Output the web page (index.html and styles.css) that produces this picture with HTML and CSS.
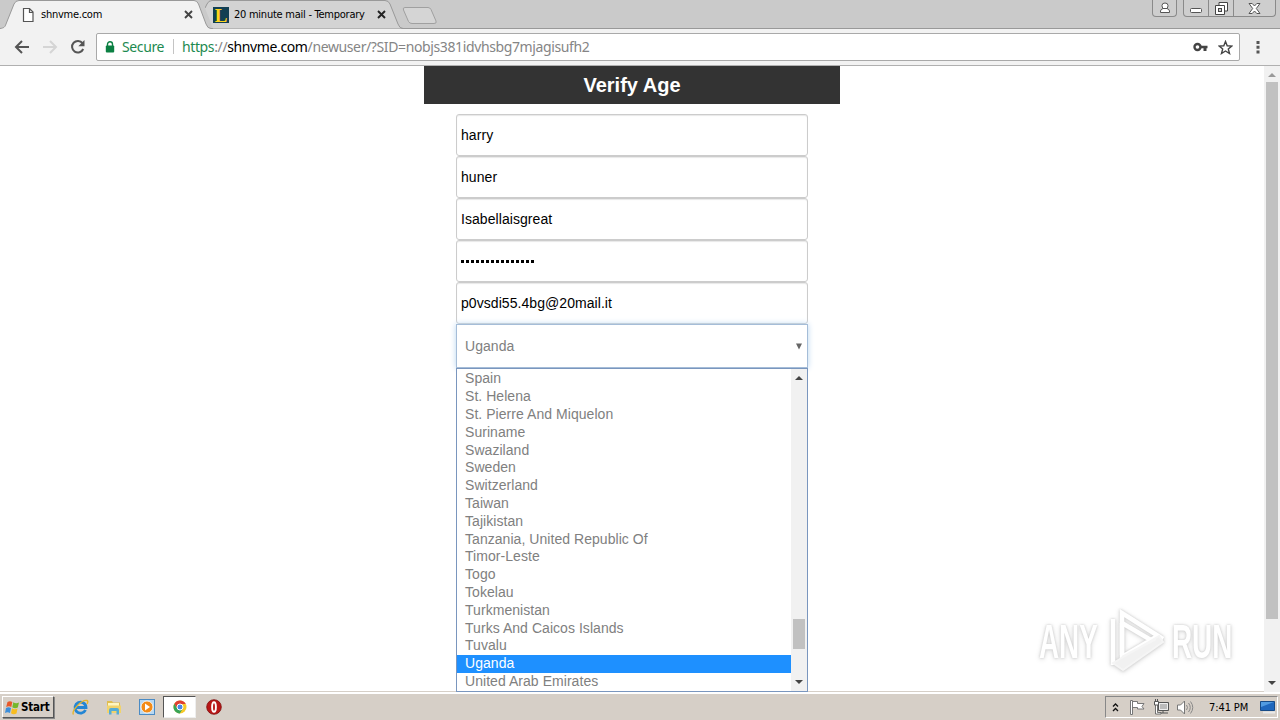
FILE: index.html
```html
<!DOCTYPE html>
<html lang="en">
<head>
    <meta charset="utf-8">
    <title>Verify Age</title>
    <link rel="stylesheet" href="styles.css">
</head>
<body>
    <div class="tabstrip">
        <div class="tab tab-active">
            <svg class="tab-shape" width="212" height="29" viewBox="0 0 212 29"><path d="M0 28.5C4 28 5 27 6 24L14 4Q15.500 .5 19 .5H194Q197 .5 198.500 4L206 24Q207.500 28.500 211 28.500V29H0Z" fill="#f2f2f2"/><path d="M0 28.500C4 28 5 27 6 24L14 4Q15.500 .5 19 .5H194Q197 .5 198.500 4L206 24Q207.500 28.500 211 28.500" fill="none" stroke="#999"/></svg>
            <svg class="favicon" width="16" height="16" viewBox="0 0 16 16"><path d="M3.500 1.500h6l3.500 3.500v9.500H3.500zM9.500 1.500V5.500H13" fill="#fff" stroke="#555" stroke-width="1.200"/></svg>
            <span class="tab-title">shnvme.com</span>
            <svg class="tab-close" width="9" height="9" viewBox="0 0 9 9"><path d="M1 1l7 7M8 1L1 8" stroke="#444" stroke-width="1.900"/></svg>
        </div>
        <div class="tab tab-second">
            <svg class="tab-shape" width="198" height="29" viewBox="0 0 198 29"><path d="M0 8L2 4Q3.500 .5 7 .5H180Q183.500 .5 185 4L193 24Q194.500 28.500 198 28.500H8Z" fill="#d3d3d3"/><path d="M0 8L2 4Q3.500 .5 7 .5H180Q183.500 .5 185 4L193 24Q194.500 28.500 198 28.500" fill="none" stroke="#999"/></svg>
            <span class="favicon favicon-l">L</span>
            <span class="tab-title">20 minute mail - Temporary</span>
            <svg class="tab-close" width="9" height="9" viewBox="0 0 9 9"><path d="M1 1l7 7M8 1L1 8" stroke="#222" stroke-width="1.900"/></svg>
        </div>
        <svg class="new-tab" width="36" height="18" viewBox="0 0 36 18"><path d="M3 .5H26Q28 .5 29 2.500L34 14Q35 16.500 32 16.500H10Q7.500 16.500 6.500 14.500L1.500 3Q.5 .5 3 .5Z" fill="#d5d5d5" stroke="#a0a0a0"/></svg>
        <div class="window-buttons">
            <div class="win-btn user"><svg width="12" height="12" viewBox="0 0 12 12"><path d="M1.500 10.500V9Q1.500 7.500 4 6.500Q3 5 3 3.500Q3 1 6 1Q9 1 9 3.500Q9 5 8 6.500Q10.500 7.500 10.500 9V10.500Z" fill="#fff" stroke="#555"/><path d="M4 6.500h4" stroke="#555"/></svg></div>
            <div class="win-btn min"><svg width="13" height="5" viewBox="0 0 13 5"><rect x=".5" y=".5" width="11" height="4" rx="1" fill="#fff" stroke="#555"/></svg></div>
            <div class="win-btn max"><svg width="13" height="13" viewBox="0 0 13 13"><path d="M4 .5h8.500v8.500h-3v3.500H.5V3.500H4zM4 3.500h5.500V9" fill="#fff" stroke="#444"/><rect x="3.500" y="6.500" width="3" height="3" fill="#ccc" stroke="#444"/></svg></div>
            <div class="win-btn close"><svg width="13" height="11" viewBox="0 0 13 11"><path d="M1 .5h3.200L6.500 3 8.800 .5H12L8.300 5.500 12 10.500H8.800L6.500 8 4.200 10.500H1L4.700 5.500Z" fill="#fff" stroke="#555"/></svg></div>
        </div>
    </div>

    <div class="toolbar">
        <svg class="nav" width="16" height="16" viewBox="0 0 16 16"><path d="M15 8H3M8 2L2 8l6 6" fill="none" stroke="#555" stroke-width="2"/></svg>
        <svg class="nav" width="16" height="16" viewBox="0 0 16 16"><path d="M1 8h12M8 2l6 6-6 6" fill="none" stroke="#d5d5d5" stroke-width="2"/></svg>
        <svg class="nav" width="16" height="16" viewBox="0 0 16 16"><path d="M13.200 10A5.800 5.800 0 1 1 12.500 4.200" fill="none" stroke="#555" stroke-width="2"/><path d="M14.500 1v6.200H8.300Z" fill="#555"/></svg>
        <div class="omnibox">
            <svg class="lock" width="10" height="12" viewBox="0 0 10 12"><path d="M2.500 5V3.300a2.500 2.500 0 0 1 5 0V5" fill="none" stroke="#0b8043" stroke-width="1.400"/><rect x=".8" y="4.500" width="8.400" height="7" rx="1" fill="#0b8043"/></svg>
            <span class="secure">Secure</span>
            <span class="url"><span class="scheme">https</span>://<b>shnvme.com</b>/newuser/?SID=nobjs381idvhsbg7mjagisufh2</span>
            <svg class="key" width="15" height="10" viewBox="0 0 15 10"><circle cx="4.500" cy="5" r="3" fill="none" stroke="#444" stroke-width="2.400"/><path d="M7 3.700h7.500v2.600H13.500V9h-3V6.300H7z" fill="#444"/></svg>
            <svg class="star" width="15" height="15" viewBox="0 0 15 15"><path d="M7.500 1.500l1.700 4.300 4.600.3-3.500 2.900 1.200 4.500-4-2.500-4 2.500 1.200-4.500L1.200 6.100l4.600-.3z" fill="none" stroke="#444" stroke-width="1.400"/></svg>
        </div>
        <svg class="menu" width="4" height="14" viewBox="0 0 4 14"><path d="M.5 1h3v3h-3zM.5 5.700h3v3h-3zM.5 10.500h3v3h-3z" fill="#555"/></svg>
    </div>

    <div class="page">
        <div class="content">
            <h1>Verify Age</h1>
            <form class="signup">
                <div class="field">harry</div>
                <div class="field">huner</div>
                <div class="field">Isabellaisgreat</div>
                <div class="field"><span class="dots"></span></div>
                <div class="field">p0vsdi55.4bg@20mail.it</div>
                <div class="select">Uganda
                    <svg width="8" height="7" viewBox="0 0 8 7"><path d="M1 .5h6L4 6.500z" fill="#666"/></svg>
                </div>
                <div class="dropdown">
                    <ul>
                        <li>Spain</li>
                        <li>St. Helena</li>
                        <li>St. Pierre And Miquelon</li>
                        <li>Suriname</li>
                        <li>Swaziland</li>
                        <li>Sweden</li>
                        <li>Switzerland</li>
                        <li>Taiwan</li>
                        <li>Tajikistan</li>
                        <li>Tanzania, United Republic Of</li>
                        <li>Timor-Leste</li>
                        <li>Togo</li>
                        <li>Tokelau</li>
                        <li>Turkmenistan</li>
                        <li>Turks And Caicos Islands</li>
                        <li>Tuvalu</li>
                        <li class="selected">Uganda</li>
                        <li>United Arab Emirates</li>
                    </ul>
                    <div class="list-scroll">
                        <svg width="8" height="4" viewBox="0 0 8 4"><path d="M0 4L4 0l4 4z" fill="#444"/></svg>
                        <div class="thumb"></div>
                        <svg width="8" height="4" viewBox="0 0 8 4"><path d="M0 0h8L4 4z" fill="#444"/></svg>
                    </div>
                </div>
            </form>
        </div>
        <div class="page-scroll">
            <svg width="8" height="4" viewBox="0 0 8 4"><path d="M0 4L4 0l4 4z" fill="#999"/></svg>
            <div class="thumb"></div>
            <svg width="8" height="4" viewBox="0 0 8 4"><path d="M0 0h8L4 4z" fill="#444"/></svg>
        </div>
        <div class="watermark">
            <span>ANY</span>
            <svg width="58" height="64" viewBox="0 0 58 64"><g fill="none" stroke="#fff" stroke-width="4.500"><path d="M13 46V4l41 26"/><path d="M4 56V10M13 14l34 20M13 14v34l34-20"/></g><path d="M4 54L50 27l4 6L14 61zM13 48l34-18" fill="#f1f1f1" stroke="#f5f5f5" stroke-width="2"/></svg>
            <span>RUN</span>
        </div>
    </div>

    <div class="taskbar">
        <div class="start">
            <svg width="15" height="15" viewBox="0 0 15 15"><path d="M2.500 2Q5 .5 7.300 2L6.300 7Q4 5.500 1.200 7Z" fill="#e8582a"/><path d="M8.300 2.300Q11 4 14 2.500L12.800 7.500Q10 9 7.300 7.300Z" fill="#75b72b"/><path d="M1 8Q3.500 6.500 6 8L5 13Q2.500 11.500 0 13Z" fill="#3c8edb"/><path d="M7 8.300Q9.500 10 12.500 8.500L11.500 13.500Q8.500 15 6 13.300Z" fill="#f8bd20"/></svg>
            <span>Start</span>
        </div>
        <div class="task"><svg width="17" height="17" viewBox="0 0 17 17"><path d="M13.500 11A5.500 5.500 0 1 1 14 8.500H4" fill="none" stroke="#2386d4" stroke-width="2.800"/><path d="M1.500 15.500C-1 12 10 0 15 1.500c1.500.5.500 2.500 0 3.500" fill="none" stroke="#e5b52c" stroke-width="1.400"/></svg></div>
        <div class="task"><svg width="16" height="16" viewBox="0 0 16 16"><path d="M1 2h5l1 1.500h7V13H1z" fill="#e0bd50"/><path d="M2 4h11v5H2z" fill="#fff6c0"/><path d="M1 6.500h14V14H1z" fill="#f1d36c"/><path d="M3 15.500v-4.500q0-2 2-2h6q2 0 2 2v4.500h-2.500v-3.500h-5v3.500z" fill="#55acd6"/></svg></div>
        <div class="task"><svg width="16" height="16" viewBox="0 0 16 16"><rect x=".5" y=".5" width="15" height="15" fill="#b7d8f2" stroke="#4b8bc4"/><circle cx="8" cy="8" r="6" fill="#f38b17" stroke="#fff" stroke-width=".8"/><path d="M6 4.500v7l5-3.500z" fill="#fff"/></svg></div>
        <div class="task task-active"><svg width="14" height="14" viewBox="0 0 14 14"><circle cx="7" cy="7" r="6.500" fill="#f6c928"/><path d="M1.300 3.800A6.500 6.500 0 0 1 12.800 4H7L4 8.500z" fill="#df4032"/><path d="M1.300 3.800A6.500 6.500 0 0 0 6.800 13.500L9.500 9 4.200 8.500z" fill="#37a457"/><circle cx="7" cy="7" r="3" fill="#4788e8" stroke="#fff"/></svg></div>
        <div class="task opera"><svg width="16" height="16" viewBox="0 0 16 16"><circle cx="8" cy="8" r="7.300" fill="#b91616" stroke="#7d0c0c" stroke-width=".8"/><ellipse cx="8" cy="8" rx="1.900" ry="4.800" fill="#b91616" stroke="#fff" stroke-width="1.900"/></svg></div>
        <div class="tray">
            <svg class="chevrons" width="7" height="9" viewBox="0 0 7 9"><path d="M1 3.500L3.500 1 6 3.500M1 8l2.500-2.500L6 8" fill="none" stroke="#111" stroke-width="1.300"/></svg>
            <svg class="flag" width="16" height="16" viewBox="0 0 16 16"><path d="M1.500 15.500V1.500h2v14zM3.500 2.500h5v2h6.500l-2 3 2 2.500H8.500V8.500h-5z" fill="#fff" stroke="#777"/></svg>
            <svg class="network" width="16" height="16" viewBox="0 0 16 16"><path d="M5.500 3.500h10v8h-10z" fill="#bbb" stroke="#555"/><path d="M6.500 4.500h8v6h-8z" fill="none" stroke="#eee"/><path d="M7 14h8M10 11.500V14" stroke="#555"/><path d="M2.500 5.500h2v8H8v1.500H2.500z" fill="#fff" stroke="#555" stroke-width=".8"/><path d="M1.500 2.500h4v3.500h-4zM2.500 0v2M4.500 0v2" fill="#fff" stroke="#555"/></svg>
            <svg class="sound" width="17" height="15" viewBox="0 0 17 15"><path d="M.5 5h3L7.500 1v13l-4-4h-3z" fill="#fff" stroke="#777"/><path d="M9.500 5q2 2.500 0 5M11.500 3q3.500 4.500 0 9M13.500 1.500q4.500 6 0 12" fill="none" stroke="#888"/></svg>
            <span class="clock">7:41 PM</span>
            <svg class="desktop" width="16" height="14" viewBox="0 0 16 14"><path d="M.5 1.500h14v9H.5z" fill="#1f67bd" stroke="#174b87"/><path d="M1 2h13L1 7z" fill="#519be1"/><path d="M3 12.500h12" stroke="#e8e8e8" stroke-width="2"/></svg>
        </div>
    </div>
</body>
</html>
```

FILE: styles.css
```css
* {
    box-sizing: border-box;
}
body {
    margin: 0;
    width: 1280px;
    height: 720px;
    overflow: hidden;
    display: flex;
    flex-direction: column;
    background: #fff;
    font-family: "Liberation Sans", Arial, sans-serif;
}
svg {
    display: block;
    flex: none;
}

/* tabs */
.tabstrip {
    height: 29px;
    flex: none;
    display: flex;
    background: #cacaca;
    box-shadow: inset 0 -1px #999;
    font-family: "DejaVu Sans Condensed", "DejaVu Sans", sans-serif;
    font-size: 11px;
}
.tab {
    position: relative;
    height: 29px;
    display: flex;
    align-items: center;
}
.tab > * {
    position: relative;
}
.tab .tab-shape {
    position: absolute;
    left: 0;
    top: 0;
}
.tab-active {
    width: 205px;
    padding-left: 20px;
    z-index: 1;
}
.tab-second {
    width: 198px;
    padding-left: 8px;
}
.favicon {
    flex: none;
    margin-right: 5px;
}
.favicon-l {
    width: 16px;
    height: 16px;
    background: #123f52;
    color: #ffd51c;
    font: bold 19px/17px "Liberation Serif", serif;
    text-align: center;
}
.tab-title {
    width: 143px;
    white-space: nowrap;
    letter-spacing: -0.25px;
}
.tab-second .tab-title {
    width: 135px;
    margin-right: 8px;
}
.new-tab {
    margin: 7px 0 0 -1px;
}
.window-buttons {
    margin-left: auto;
    margin-right: 4px;
    display: flex;
}
.win-btn {
    height: 17px;
    border: 1px solid #8a8a8a;
    border-top: 0;
    display: flex;
    align-items: center;
    justify-content: center;
    background: #cecece;
}
.user {
    width: 25px;
    margin-right: 6px;
    border-radius: 0 0 4px 4px;
}
.min {
    width: 26px;
    padding-top: 4px;
    border-radius: 0 0 0 4px;
}
.max {
    width: 25px;
    border-left: 0;
}
.close {
    width: 42px;
    border-left: 0;
    border-radius: 0 0 4px 0;
}

/* address bar */
.toolbar {
    height: 37px;
    flex: none;
    display: flex;
    align-items: center;
    padding-left: 14px;
    background: #f2f2f2;
    border-bottom: 1px solid #b0b0b0;
}
.nav {
    margin-right: 12px;
}
.omnibox {
    width: 1144px;
    height: 28px;
    margin-left: -2px;
    display: flex;
    align-items: center;
    padding: 0 6px 0 8px;
    background: #fff;
    border: 1px solid #a9a9a9;
    border-radius: 2px;
    font-family: "Noto Sans", sans-serif;
    font-size: 14px;
    letter-spacing: -0.38px;
    white-space: nowrap;
}
.lock {
    margin-bottom: 1px;
}
.secure {
    width: 52px;
    margin: -2px 8px 0 7px;
    line-height: 15px;
    border-right: 1px solid #c4c4c4;
    color: #1d8a50;
}
.url {
    margin-top: -2px;
    color: #858585;
}
.url b {
    color: #000;
    font-weight: normal;
}
.scheme {
    color: #1d8a50;
}
.key {
    margin: 0 10px 0 auto;
}
.menu {
    margin-left: 16px;
}

/* page */
.page {
    position: relative;
    height: 626px;
    flex: none;
    display: flex;
}
.content {
    width: 416px;
    margin-left: 424px;
}
h1 {
    height: 38px;
    margin: 0 0 10px;
    background: #333;
    color: #fff;
    font-size: 20px;
    line-height: 38px;
    text-align: center;
}
.signup {
    width: 352px;
    margin: 0 auto;
    font-size: 14px;
}
.field {
    height: 42px;
    padding-left: 4px;
    border: 1px solid #ccc;
    border-radius: 3px;
    box-shadow: inset 0 1px 1px #e8e8e8;
    line-height: 41px;
    letter-spacing: 0.06px;
    color: #000;
}
.dots {
    display: block;
    width: 75px;
    height: 3px;
    margin-top: 19px;
    background: repeating-linear-gradient(90deg, #000 0 3px, transparent 3px 5px);
}
.select {
    height: 44px;
    display: flex;
    align-items: center;
    justify-content: space-between;
    padding: 0 4px 0 8px;
    border: 1px solid #a5bdd8;
    box-shadow: 0 0 6px #b8d5f0;
    color: #808080;
    letter-spacing: 0.05px;
}
.dropdown {
    position: relative;
    height: 324px;
    display: flex;
    border: 1px solid #7a96be;
    background: #fff;
    color: #808080;
    letter-spacing: 0.05px;
}
ul {
    flex: 1;
    margin: 0;
    padding: 1.4px 0 0;
    list-style: none;
}
li {
    height: 17.8px;
    padding-left: 8px;
    line-height: 17.8px;
    white-space: nowrap;
}
.selected {
    background: #1e90ff;
    color: #fff;
}
.list-scroll,
.page-scroll {
    width: 16px;
    display: flex;
    flex-direction: column;
    align-items: center;
    background: #f1f1f1;
}
.list-scroll {
    padding: 7px 0;
}
.list-scroll .thumb {
    width: 12px;
    height: 30px;
    margin: 239px 0 31px;
    background: #c1c1c1;
}
.page-scroll {
    margin-left: auto;
    padding-top: 7px;
}
.page-scroll .thumb {
    width: 12px;
    height: 537px;
    margin: 5px 0 62px;
    background: #c1c1c1;
}

/* logo laid over the page corner */
.watermark {
    position: absolute;
    left: 1039px;
    top: 543px;
    height: 64px;
    display: flex;
    align-items: center;
    color: #fff;
    font-size: 48px;
    font-weight: bold;
    filter: drop-shadow(0 0 1px #ccc) drop-shadow(0 1px 2px #ddd);
}
.watermark span {
    width: 70px;
    transform: scaleX(0.58);
    transform-origin: left;
}
.watermark svg {
    margin-right: 5px;
}

/* taskbar */
.taskbar {
    height: 28px;
    flex: none;
    display: flex;
    align-items: center;
    padding: 0 2px;
    background: #d6cfc7;
    border-top: 2px solid #fff;
    box-shadow: 0 -1px #d6cfc7;
}
.start {
    width: 52px;
    height: 22px;
    display: flex;
    align-items: center;
    gap: 1px;
    padding-left: 2px;
    border: 1px solid;
    border-color: #fff #555 #555 #fff;
    box-shadow: 1px 1px #888;
    font: bold 11.500px "DejaVu Sans Condensed", sans-serif;
    letter-spacing: -0.2px;
    margin-right: 10px;
}
.task {
    width: 33px;
    height: 22px;
    display: flex;
    align-items: center;
    justify-content: center;
}
.task-active {
    background: #fff;
    border: 1px solid;
    border-color: #555 #eee #eee #555;
}
.opera {
    padding-left: 3px;
}
.tray {
    width: 173px;
    height: 22px;
    margin-left: auto;
    display: flex;
    align-items: center;
    padding-left: 6px;
    border: 1px solid;
    border-color: #888 #fff #fff #888;
    font-family: "DejaVu Sans Condensed", sans-serif;
    font-size: 11px;
}
.flag {
    margin-left: 10px;
}
.network {
    margin-left: 8px;
}
.sound {
    margin-left: 8px;
}
.clock {
    width: 43px;
    margin: 0 8px 0 15px;
    white-space: nowrap;
    letter-spacing: -0.1px;
}
```
